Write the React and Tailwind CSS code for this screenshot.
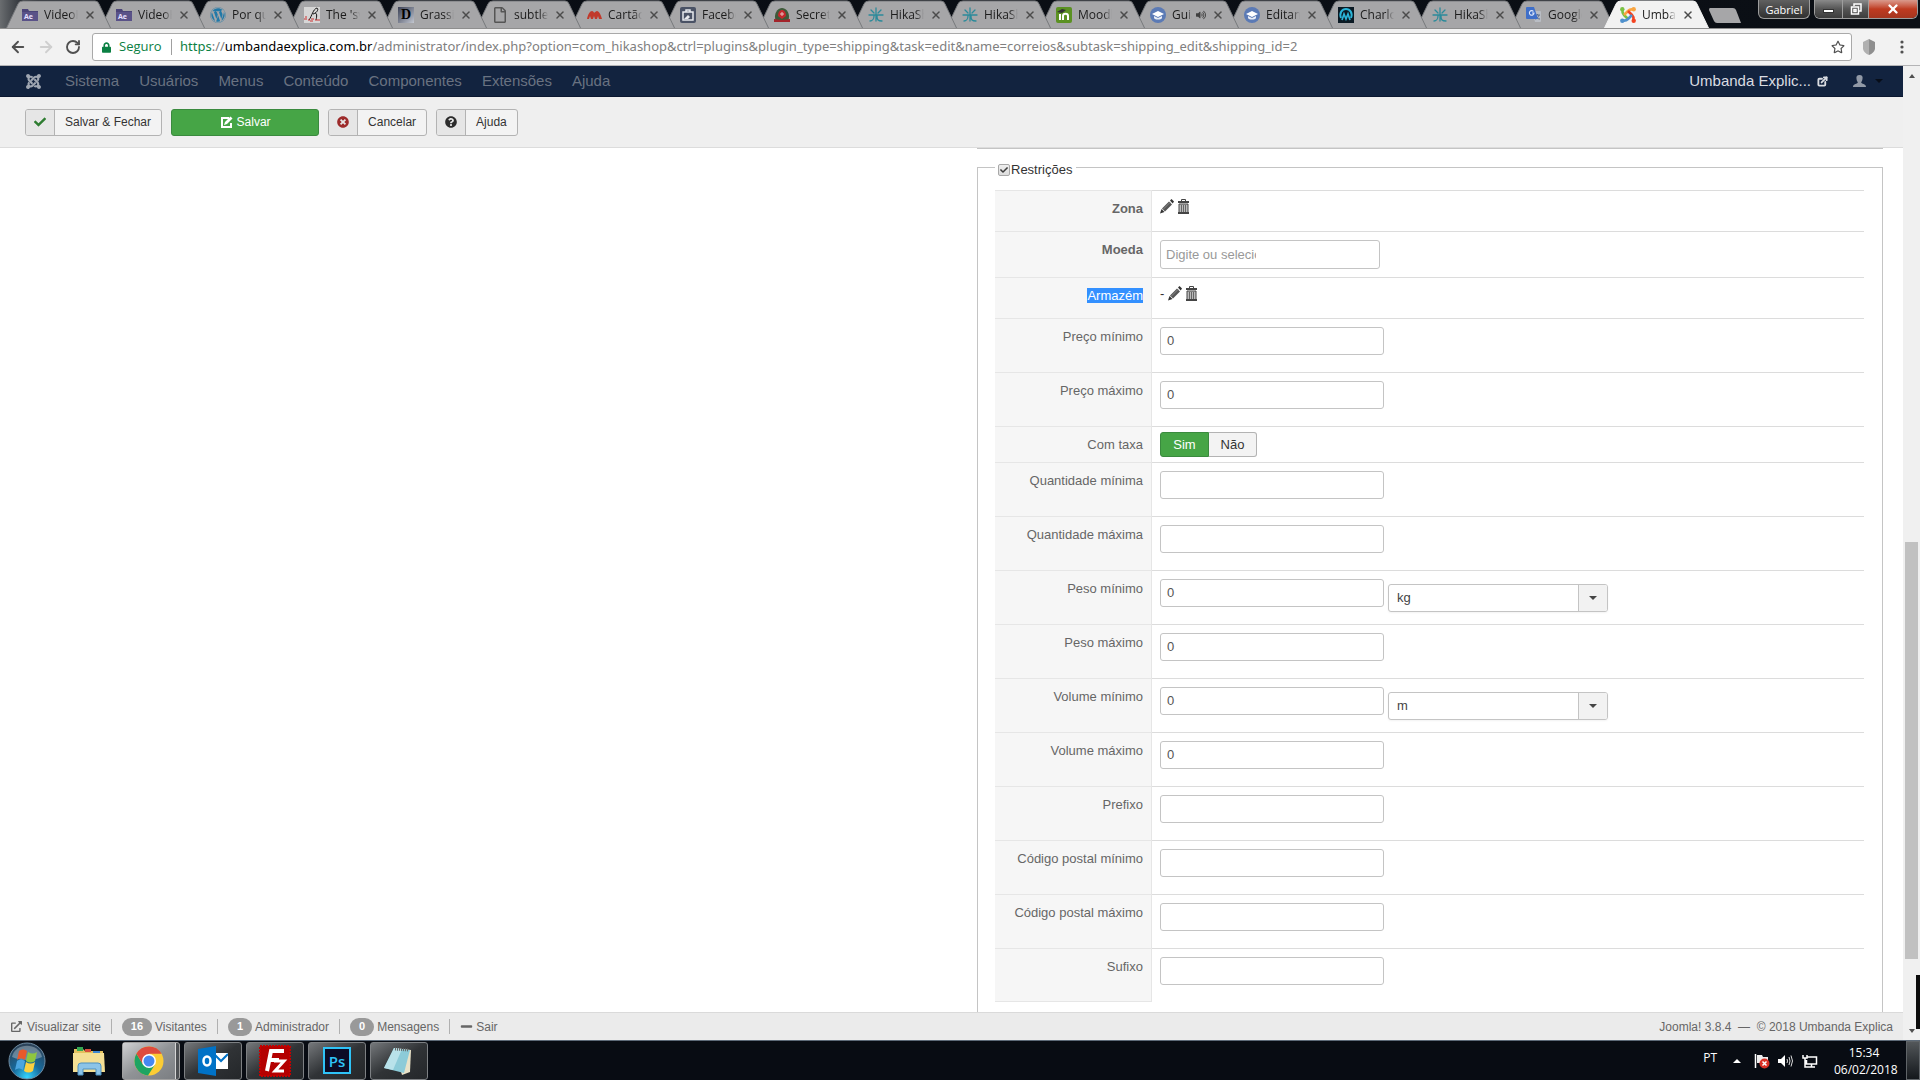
import { useState } from "react";
import {
  FaCheck,
  FaExternalLinkAlt,
  FaJoomla,
  FaLock,
  FaMinus,
  FaQuestionCircle,
  FaRegFile,
  FaRegStar,
  FaTimesCircle,
  FaVolumeUp,
  FaWordpress,
} from "react-icons/fa";
import { FiExternalLink } from "react-icons/fi";
import { ArrowLeft, ArrowRight, RotateCw, X } from "lucide-react";

/* ---------- tab icons ---------- */

const AfterEffectsIcon = () => (
  <svg viewBox="0 0 16 16" className="h-4 w-4">
    <path d="M0 2h6l1 2h9v10H0z" fill="#4b4478" />
    <path d="M0 5h16v9H0z" fill="#5a5288" />
    <text x="2" y="12" fontSize="7" fontWeight="bold" fill="#e6e0ff" fontFamily="Open Sans, sans-serif">Ae</text>
  </svg>
);

const SvelloIcon = () => (
  <svg viewBox="0 0 16 16" className="h-4 w-4">
    <rect width="16" height="16" fill="#d6d6d6" />
    <path d="M5 13C8 9 9 2 13 1c2 1 0 5-4 6M11 6c2 0 2 3 1 7" fill="none" stroke="#111" strokeWidth="1" />
    <path d="M0 12h3M4 13h2M7 12h3M11 13h5M1 10h2M6 14h3" stroke="#c33" strokeWidth="1" />
  </svg>
);

const GrassiIcon = () => (
  <span className="flex h-4 w-4 items-center justify-center bg-linear-to-br from-[#3c4256] to-[#c3c7d0] font-['Liberation_Serif',serif] text-sm leading-4 font-bold text-black">
    D
  </span>
);

const CartaoIcon = () => (
  <svg viewBox="0 0 16 16" className="h-4 w-4">
    <path d="M1 12c1-5 3-8 5-8 1 0 2 1 2 2 1-1 2-2 3-2 2 0 4 4 5 8h-3l-1-3-1 3H9l-1-3-1 3H5l-1-3-1 3z" fill="#c1392b" />
  </svg>
);

const FacebookIcon = () => (
  <svg viewBox="0 0 16 16" className="h-4 w-4">
    <rect width="16" height="16" rx="2" fill="#4a5265" />
    <path d="M3 5h10v8H3zM6 5V3h4v2" fill="none" stroke="#e8eaee" strokeWidth="1.500" />
    <path d="M4 12l4-4 2 2-2 2z" fill="#e8eaee" />
  </svg>
);

const SecretIcon = () => (
  <svg viewBox="0 0 16 16" className="h-4 w-4">
    <path d="M2 14C-1 8 3 1 8 1s9 7 6 13z" fill="#3f5a3a" />
    <path d="M4 9c0-4 2-6 4-6s4 2 4 6l-4 3z" fill="#c6282d" />
    <path d="M0 12l8 1 8-1v3H0z" fill="#a3242b" />
    <path d="M6 7h4M8 5v4" stroke="#e6c0c0" />
  </svg>
);

const HikaIcon = () => (
  <svg viewBox="0 0 16 16" className="h-4 w-4" fill="none" stroke="#2b8a9a" strokeWidth="1.300" strokeLinecap="round">
    <path d="M8 1v6M3 3l3 3M13 3l-3 3M1 8h14M6 9c0 3-2 5-4 5M9 9c0 4 1 5 5 5M8 9v5" />
  </svg>
);

const MoodleIcon = () => (
  <svg viewBox="0 0 16 16" className="h-4 w-4">
    <rect width="16" height="16" rx="2" fill="#5b9122" />
    <path d="M4 13V7M7 13V9c0-3 5-3 5 0v4" fill="none" stroke="#fff" strokeWidth="2" />
    <path d="M1 5l5-3 4 1-4 3z" fill="#333" />
  </svg>
);

const GraduateIcon = () => (
  <svg viewBox="0 0 16 16" className="h-4 w-4">
    <circle cx="8" cy="8" r="8" fill="#5b7ab5" />
    <path d="M2 7l6-3 6 3-6 3z" fill="#fff" />
    <path d="M4 9v2c1 2 7 2 8 0V9l-4 2z" fill="#e8edf6" />
  </svg>
);

const CharloIcon = () => (
  <svg viewBox="0 0 16 16" className="h-4 w-4">
    <rect width="16" height="16" fill="#0b1a24" />
    <path d="M3 11C1 6 4 2 8 2s7 4 5 9" fill="none" stroke="#2bb5d8" strokeWidth="2" />
    <path d="M4 13l2-6 2 5 2-5 2 6" fill="none" stroke="#2bb5d8" strokeWidth="1.700" />
  </svg>
);

const TranslateIcon = () => (
  <svg viewBox="0 0 16 16" className="h-4 w-4">
    <path d="M6 4h8q1 0 1 1v9q0 1-1 1H9z" fill="#b9bdc4" />
    <path d="M9 8h5M11.500 7v1M13 8c-.500 2-2 4-4 4M10 9c1 2 2 3 4 3" fill="none" stroke="#5d6f8f" />
    <path d="M1 0h7l4 12H1q-1 0-1-1V1q0-1 1-1z" fill="#3f6fc9" />
    <path d="M7.500 4.500A2.300 2.300 0 1 0 8 6H6" fill="none" stroke="#dfe8fa" strokeWidth="1.100" />
  </svg>
);

const JoomlaColorIcon = () => (
  <svg viewBox="0 0 16 16" className="h-4 w-4" fill="none" strokeWidth="2.600">
    <path d="M2.500 3C2 6 3 7 4 8l4 4" stroke="#7ac143" />
    <path d="M13 2.500C10 2 9 3 8 4L4 8" stroke="#f9a541" />
    <path d="M13.500 13C14 10 13 9 12 8L8 4" stroke="#f44321" />
    <path d="M3 13.500C6 14 7 13 8 12l4-4" stroke="#5091cd" />
    <g stroke="none">
      <circle cx="2.300" cy="2.300" r="2.200" fill="#7ac143" />
      <circle cx="13.700" cy="2.300" r="2.200" fill="#f9a541" />
      <circle cx="13.700" cy="13.700" r="2.200" fill="#f44321" />
      <circle cx="2.300" cy="13.700" r="2.200" fill="#5091cd" />
    </g>
  </svg>
);

const tabs = [
  { title: "VideoHive", icon: <AfterEffectsIcon /> },
  { title: "VideoHive", icon: <AfterEffectsIcon /> },
  { title: "Por que", icon: <FaWordpress className="h-4 w-4 text-[#2179a8]" /> },
  { title: "The 'svello", icon: <SvelloIcon /> },
  { title: "Grassi_", icon: <GrassiIcon /> },
  { title: "subtle_p", icon: <FaRegFile className="h-4 w-4 text-[#555]" /> },
  { title: "Cartão", icon: <CartaoIcon /> },
  { title: "Facebook", icon: <FacebookIcon /> },
  { title: "Secreta", icon: <SecretIcon /> },
  { title: "HikaShop", icon: <HikaIcon /> },
  { title: "HikaShop", icon: <HikaIcon /> },
  { title: "Moodle", icon: <MoodleIcon /> },
  { title: "Guia", icon: <GraduateIcon />, audio: true },
  { title: "Editando", icon: <GraduateIcon /> },
  { title: "Charlott", icon: <CharloIcon /> },
  { title: "HikaShop", icon: <HikaIcon /> },
  { title: "Google", icon: <TranslateIcon /> },
  { title: "Umbanda", icon: <JoomlaColorIcon />, active: true },
];

const Tab = ({ tab, order }) => (
  <div className="relative h-[29px] w-[94px] shrink-0" style={{ zIndex: tab.active ? 50 : order }}>
    <svg viewBox="0 0 106 29" className="absolute top-0 left-0 h-[29px] w-[106px]">
      <path
        d="M0 29L12 4Q13 1 17 1H89Q92 1 93 4L105 29Z"
        fill={tab.active ? "#f2f2f2" : "#a6a6a8"}
        stroke={tab.active ? "#f2f2f2" : "#77797c"}
        strokeWidth="1"
      />
    </svg>
    <div className="relative flex h-[29px] items-center pl-4">
      {tab.icon}
      <span
        className={`ml-[6px] overflow-hidden text-xs whitespace-nowrap text-[#1c1c1c] mask-r-from-75% ${
          tab.audio ? "w-[20px]" : "w-[34px]"
        }`}
      >
        {tab.title}
      </span>
      {tab.audio && <FaVolumeUp className="ml-[4px] h-[10px] w-[10px] text-[#3f3f3f]" />}
      <button aria-label="Fechar guia" className="ml-[6px] text-[#4c4c4c]">
        <X className="h-3 w-3" strokeWidth={3} />
      </button>
    </div>
  </div>
);

const BrowserChrome = () => (
  <header className="shrink-0 font-['Open_Sans','Noto_Sans',sans-serif]">
    <div className="flex h-[29px] items-start justify-between overflow-hidden border-b border-[#8e8e8e] bg-linear-to-r from-[#6a6d70] from-0% via-[#090d14] via-2% to-[#0b0f15]">
      <div className="flex pl-[6px]">
        {tabs.map((tab, i) => (
          <Tab key={i} tab={tab} order={30 - i} />
        ))}
        <button aria-label="Nova guia" className="mt-2 ml-[11px] h-[16px] w-[32px]">
          <svg viewBox="0 0 32 16" className="h-4 w-8">
            <path d="M1 0H24Q26 0 27 2L32 15H8Q6 15 5 13L0 2Q0 0 1 0Z" fill="#a6a6a8" />
          </svg>
        </button>
      </div>
      <div className="flex h-[19px] gap-1 pr-[2px]">
        <button className="w-[52px] rounded-b-md border border-t-0 border-[#9d9d9d] bg-linear-to-b from-[#606060] to-[#303030] text-[11px] leading-[17px] text-white">
          Gabriel
        </button>
        <div className="flex overflow-hidden rounded-b-md border border-t-0 border-[#9d9d9d] text-white">
          <button aria-label="Minimizar" className="flex w-[27px] items-center justify-center bg-linear-to-b from-[#8a8a8a] via-[#555] to-[#3d3d3d]">
            <span className="mt-1 h-[4px] w-[11px] border border-[#333] bg-white" />
          </button>
          <button aria-label="Restaurar" className="flex w-[27px] items-center justify-center border-x border-[#9d9d9d] bg-linear-to-b from-[#8a8a8a] via-[#555] to-[#3d3d3d]">
            <svg viewBox="0 0 12 12" className="h-3 w-3" fill="none" stroke="#fff" strokeWidth="1.500">
              <path d="M4 3V1h7v7H9M1.500 4h7v7h-7zM4 6.500h2v2H4z" />
            </svg>
          </button>
          <button aria-label="Fechar" className="flex w-[48px] items-center justify-center bg-linear-to-b from-[#d9998c] via-[#bf3a20] to-[#a5361f]">
            <X className="h-[14px] w-[14px]" strokeWidth={4} />
          </button>
        </div>
      </div>
    </div>

    <div className="flex h-[37px] items-center border-b border-[#b4b4b6] bg-[#f2f2f2]">
      <div className="flex w-[92px] items-center gap-[10px] pl-[9px] text-[#505050]">
        <button aria-label="Voltar"><ArrowLeft className="h-[18px] w-[18px]" strokeWidth={2.500} /></button>
        <button aria-label="Avançar" className="text-[#cfcfcf]"><ArrowRight className="h-[18px] w-[18px]" strokeWidth={2.500} /></button>
        <button aria-label="Recarregar"><RotateCw className="h-4 w-4" strokeWidth={2.800} /></button>
      </div>
      <div className="flex h-[28px] flex-1 items-center rounded-[3px] border border-[#a9a9a9] bg-white pr-[6px] pl-[9px] text-[13px] whitespace-nowrap">
        <FaLock className="h-[11px] w-[9px] text-[#0b8043]" />
        <span className="ml-2 w-[52px] text-[#0b8043]">Seguro</span>
        <span className="mr-2 h-4 w-px bg-[#a0a0a0]" />
        <div className="flex-1 overflow-hidden font-['Noto_Sans','Open_Sans',sans-serif] text-[#808080]">
          <span className="text-[#0b8043]">https</span>://<span className="text-black">umbandaexplica.com.br</span>
          /administrator/index.php?option=com_hikashop&amp;ctrl=plugins&amp;plugin_type=shipping&amp;task=edit&amp;name=correios&amp;subtask=shipping_edit&amp;shipping_id=2
        </div>
        <button aria-label="Favoritar" className="text-[#505050]"><FaRegStar className="h-[14px] w-[14px]" /></button>
      </div>
      <div className="flex w-[68px] items-center justify-between pr-[16px] pl-[10px]">
        <svg viewBox="0 0 14 16" className="h-4 w-[14px]">
          <path d="M7 0l6 3v7q-1 4-6 6z" fill="#8f8f8f" />
          <path d="M7 0L1 3v7q1 4 6 6z" fill="#b0b0b0" />
        </svg>
        <button aria-label="Menu">
          <svg viewBox="0 0 4 14" className="h-[14px] w-1" fill="#505050">
            <circle cx="2" cy="2" r="1.600" /><circle cx="2" cy="7" r="1.600" /><circle cx="2" cy="12" r="1.600" />
          </svg>
        </button>
      </div>
    </div>
  </header>
);

/* ---------- Joomla admin ---------- */

const menu = ["Sistema", "Usuários", "Menus", "Conteúdo", "Componentes", "Extensões", "Ajuda"];

const AdminNav = () => (
  <nav className="flex h-[31px] shrink-0 items-center border-b border-[#0b1730] bg-[#12233f] pl-[25px] text-[15px]">
    <FaJoomla className="h-[17px] w-[17px] text-[#a0a7b2]" />
    <div className="flex gap-5 pl-[23px]">
      {menu.map((item) => (
        <a key={item} href="#" className="text-[#697281]">{item}</a>
      ))}
    </div>
    <div className="ml-auto flex items-center pr-[20px]">
      <a href="#" className="flex items-center gap-[6px] text-[#dadde2]">
        Umbanda Explic...
        <FiExternalLink className="h-[11px] w-[11px]" strokeWidth={4} />
      </a>
      <button aria-label="Usuário" className="ml-[25px] flex items-center gap-[9px]">
        <svg viewBox="0 0 13 12" className="h-3 w-[13px]" fill="#9199a6">
          <path d="M6.500 0C9 0 10 1.500 9.500 4 9.200 6 8.500 6.500 8.200 7.500c0 1.500 4.800 1 4.800 4.500H0c0-3.500 4.800-3 4.800-4.500C4.500 6.500 3.800 6 3.500 4 3 1.500 4 0 6.500 0z" />
        </svg>
        <span className="border-x-4 border-t-4 border-x-transparent border-t-[#070d18]" />
      </button>
    </div>
  </nav>
);

const ToolbarButton = ({ icon, children }) => (
  <button className="flex h-[27px] overflow-hidden rounded-[3px] border border-[#b3b3b3] bg-[#f3f3f3] text-xs text-[#333]">
    <span className="flex h-full w-[29px] items-center justify-center border-r border-[#b3b3b3] bg-[#e6e6e6]">{icon}</span>
    <span className="flex h-full items-center px-[10px]">{children}</span>
  </button>
);

const Toolbar = () => (
  <div className="flex h-[51px] shrink-0 items-center gap-[9px] border-b border-[#dcdcdc] bg-[#efefef] px-[25px]">
    <ToolbarButton icon={<FaCheck className="h-3 w-3 text-[#2f7d32]" />}>Salvar &amp; Fechar</ToolbarButton>
    <button className="flex h-[27px] w-[148px] items-center justify-center gap-1 rounded-[3px] border border-[#3a8a3e] bg-[#46a546] text-xs text-white">
      <svg viewBox="0 0 13 13" className="h-[13px] w-[13px]">
        <path d="M9 2H2v9h9V7" fill="none" stroke="#fff" strokeWidth="2" />
        <path d="M4 9l1-3 5.500-5.500 2 2L7 8z" fill="#fff" />
      </svg>
      Salvar
    </button>
    <ToolbarButton icon={<FaTimesCircle className="h-3 w-3 text-[#9d2b2b]" />}>Cancelar</ToolbarButton>
    <ToolbarButton icon={<FaQuestionCircle className="h-3 w-3 text-[#2c2c2c]" />}>Ajuda</ToolbarButton>
  </div>
);

const PencilIcon = () => (
  <svg viewBox="0 0 14 15" className="h-[15px] w-[14px]">
    <path d="M0 14.500L1.500 10 4.500 13z" fill="#333" />
    <path d="M2 9.500L9 2.500 12 5.500 5 12.500z" fill="#555" />
    <path d="M3 10.500L10 3.500" stroke="#888" />
    <path d="M10 1.500L11.500 0 14 2.500 12.700 4.500z" fill="#333" />
  </svg>
);

const TrashIcon = () => (
  <svg viewBox="0 0 11 15" className="h-[15px] w-[11px]">
    <path d="M3.500 2V.500h4V2" fill="none" stroke="#444" />
    <path d="M0 2h11v2H0z" fill="#444" />
    <path d="M1 5h9v9H1z" fill="#bbb" stroke="#444" />
    <path d="M3.500 6v8M5.500 6v8M7.500 6v8" stroke="#666" />
    <path d="M0 14h11" stroke="#444" strokeWidth="2" />
  </svg>
);

const EditIcons = () => (
  <>
    <button aria-label="Editar"><PencilIcon /></button>
    <button aria-label="Excluir"><TrashIcon /></button>
  </>
);

const UnitSelect = ({ name, options }) => (
  <div className="mt-[5px] flex h-7 w-[220px] overflow-hidden rounded-[3px] border border-[#c4c4c4] bg-white shadow-xs">
    <select aria-label={name} className="flex-1 appearance-none px-2 text-[13px] text-[#444] outline-none">
      {options.map((o) => <option key={o}>{o}</option>)}
    </select>
    <span className="flex w-[29px] items-center justify-center border-l border-[#c4c4c4] bg-[#f2f2f2]">
      <span className="border-x-4 border-t-4 border-x-transparent border-t-[#444]" />
    </span>
  </div>
);

const fields = [
  { id: "preco_min", label: "Preço mínimo", value: "0" },
  { id: "preco_max", label: "Preço máximo", value: "0" },
  { id: "taxa", label: "Com taxa", toggle: true },
  { id: "qtd_min", label: "Quantidade mínima", value: "" },
  { id: "qtd_max", label: "Quantidade máxima", value: "" },
  { id: "peso_min", label: "Peso mínimo", value: "0", units: ["kg", "g"] },
  { id: "peso_max", label: "Peso máximo", value: "0" },
  { id: "vol_min", label: "Volume mínimo", value: "0", units: ["m", "cm"] },
  { id: "vol_max", label: "Volume máximo", value: "0" },
  { id: "prefixo", label: "Prefixo", value: "" },
  { id: "cep_min", label: "Código postal mínimo", value: "" },
  { id: "cep_max", label: "Código postal máximo", value: "" },
  { id: "sufixo", label: "Sufixo", value: "" },
];

const Row = ({ label, children, height = "h-[54px]", last }) => (
  <tr className={height}>
    <th
      scope="row"
      className={`w-[157px] border-t border-r border-[#e6e6e6] bg-[#f6f6f6] pt-[9px] pr-2 text-right align-top leading-[18px] font-normal text-[#666] ${last ? "border-b" : ""}`}
    >
      {label}
    </th>
    <td className="border-t border-[#dcdcdc] pl-2 align-top">{children}</td>
  </tr>
);

const TaxToggle = () => {
  const [withTax, setWithTax] = useState(true);
  const on = "border-[#3a8a3e] bg-[#46a546] text-white";
  const off = "border-[#b3b3b3] bg-[#f3f3f3] text-[#333]";
  return (
    <div className="mt-[5px] flex h-[25px]">
      <button onClick={() => setWithTax(true)} className={`w-[49px] rounded-l-[3px] border ${withTax ? on : off}`}>Sim</button>
      <button onClick={() => setWithTax(false)} className={`w-[48px] rounded-r-[3px] border border-l-0 ${withTax ? off : on}`}>Não</button>
    </div>
  );
};

const Restrictions = () => (
  <fieldset className="border border-[#c4c4c4] pt-[13px] pr-[18px] pb-10 pl-[17px]">
    <legend className="flex h-5 items-center pt-[6px] pr-1 pl-[3px] text-[#333]">
      <span className="relative flex">
        <input
          id="restricoes"
          type="checkbox"
          defaultChecked
          className="peer h-3 w-3 appearance-none rounded-xs border border-[#a8a8a8] bg-linear-to-b from-[#efefef] to-[#dcdcdc]"
        />
        <FaCheck className="pointer-events-none absolute inset-0.5 hidden h-2 w-2 text-[#3c3c3c] peer-checked:block" />
      </span>
      <label htmlFor="restricoes" className="pl-px">Restrições</label>
    </legend>
    <table className="w-full border-separate border-spacing-0 text-[13px]">
      <tbody>
        <Row label={<b>Zona</b>} height="h-[41px]">
          <div className="flex items-center gap-1 pt-2"><EditIcons /></div>
        </Row>
        <Row label={<label htmlFor="moeda" className="font-bold">Moeda</label>} height="h-[46px]">
          <div className="mt-2 h-[29px] w-[220px] rounded-[3px] border border-[#c4c4c4] bg-white pl-[5px]">
            <input id="moeda" placeholder="Digite ou selecione" className="h-full w-[90px] outline-none placeholder:text-[#999]" />
          </div>
        </Row>
        <Row label={<span className="bg-[#3390ff] text-white">Armazém</span>} height="h-[41px]">
          <div className="flex items-center gap-1 pt-2 leading-[15px]">-<EditIcons /></div>
        </Row>
        {fields.map((f, i) => (
          <Row
            key={f.id}
            label={f.toggle ? f.label : <label htmlFor={f.id}>{f.label}</label>}
            height={f.toggle ? "h-[36px]" : "h-[54px]"}
            last={i === fields.length - 1}
          >
            {f.toggle ? (
              <TaxToggle />
            ) : (
              <div className="flex items-start gap-1 pt-2">
                <input
                  id={f.id}
                  defaultValue={f.value}
                  className="h-7 w-[224px] rounded-[3px] border border-[#c4c4c4] bg-white px-[6px] pb-0.5 text-[#555]"
                />
                {f.units && <UnitSelect name={`Unidade de ${f.label}`} options={f.units} />}
              </div>
            )}
          </Row>
        ))}
      </tbody>
    </table>
  </fieldset>
);

const Badge = ({ children }) => (
  <span className="flex h-[18px] items-center rounded-full bg-[#999] px-[9px] text-[11px] font-bold text-white">{children}</span>
);

const StatusBar = () => (
  <footer className="flex h-[28px] shrink-0 items-center border-t border-[#dadada] bg-[#ebebeb] pr-[10px] pl-[11px] text-xs text-[#666]">
    <a href="#" className="flex items-center gap-[5px]"><FaExternalLinkAlt className="h-[11px] w-[11px]" />Visualizar site</a>
    <span className="mx-[10px] h-[15px] w-px bg-[#b0b0b0]" />
    <span className="flex items-center gap-[3px]"><Badge>16</Badge>Visitantes</span>
    <span className="mx-[10px] h-[15px] w-px bg-[#b0b0b0]" />
    <span className="flex items-center gap-[3px]"><Badge>1</Badge>Administrador</span>
    <span className="mx-[10px] h-[15px] w-px bg-[#b0b0b0]" />
    <a href="#" className="flex items-center gap-[3px]"><Badge>0</Badge>Mensagens</a>
    <span className="mx-[10px] h-[15px] w-px bg-[#b0b0b0]" />
    <a href="#" className="flex items-center gap-[3px]"><FaMinus className="h-[13px] w-[13px]" />Sair</a>
    <span className="ml-auto whitespace-pre">Joomla! 3.8.4  —  © 2018 Umbanda Explica</span>
  </footer>
);

const Scrollbar = () => (
  <div className="flex w-[17px] shrink-0 flex-col items-center bg-[#f0f0f0]">
    <span className="mt-2 border-x-[3px] border-b-4 border-x-transparent border-b-[#505050]" />
    <div className="flex-[464]" />
    <div className="w-[13px] flex-[417] bg-[#c1c1c1]" />
    <div className="flex-[16]" />
    <div className="w-1 flex-[54] self-end bg-[#0c0c0c]" />
    <span className="mb-[7px] border-x-[3px] border-t-4 border-x-transparent border-t-[#505050]" />
  </div>
);

/* ---------- Windows taskbar ---------- */

const StartOrb = () => (
  <svg viewBox="0 0 38 38" className="h-[38px] w-[38px]">
    <defs>
      <radialGradient id="orb" cx="50%" cy="95%" r="90%">
        <stop offset="0" stopColor="#35d6ff" />
        <stop offset=".45" stopColor="#176a9c" />
        <stop offset="1" stopColor="#2b4258" />
      </radialGradient>
    </defs>
    <circle cx="19" cy="19" r="18" fill="url(#orb)" stroke="#6f8ca3" />
    <path d="M4 15C7 0 31 0 34 15 26 19 12 19 4 15z" fill="#fff" opacity=".3" />
    <path d="M11 9c3-2 5-2 8 0l-2 9c-3-2-5-2-8 0z" fill="#e8592b" />
    <path d="M20 10c3 2 6 2 9 0l-2 9c-3 2-6 2-9 0z" fill="#8fc63f" />
    <path d="M9 19c3-2 5-2 8 0l-2 9c-3-2-5-2-8 0z" fill="#4aa5e0" />
    <path d="M18 20c3 2 6 2 9 0l-2 9c-3 2-6 2-9 0z" fill="#fbd040" />
  </svg>
);

const ExplorerIcon = () => (
  <svg viewBox="0 0 32 30" className="h-[30px] w-8">
    <path d="M1 3h9l2 2h18v20H1z" fill="#e3c25e" />
    <path d="M4 1h6v4H4z" fill="#35a853" /><path d="M12 3h6v3h-6z" fill="#d8503c" /><path d="M20 5h7v3h-7z" fill="#3f87d1" />
    <path d="M0 7h31l1 19H0z" fill="#f4df94" />
    <path d="M5 29V20q0-3 3-3h17q3 0 3 3v9h-5v-6H10v6z" fill="#8cc4e8" stroke="#4c91c2" />
  </svg>
);

const ChromeIcon = () => (
  <svg viewBox="0 0 30 30" className="h-[30px] w-[30px]">
    <circle cx="15" cy="15" r="14.500" fill="#fbcc34" />
    <path d="M2.400 7.800A14.500 14.500 0 0 0 14 29.500L21 18.500 15 15 9 18.500z" fill="#1da462" />
    <path d="M2.400 7.800A14.500 14.500 0 0 1 27.600 7.800H15L9 18.500z" fill="#dd4b3e" />
    <circle cx="15" cy="15" r="7" fill="#fff" />
    <circle cx="15" cy="15" r="5.500" fill="#4688f1" />
  </svg>
);

const OutlookIcon = () => (
  <svg viewBox="0 0 30 30" className="h-[30px] w-[30px]">
    <path d="M16 7h14v16H16z" fill="#fff" />
    <path d="M17 9l6 6 7-7" fill="none" stroke="#0072c6" strokeWidth="2" />
    <path d="M0 3l18-3v30L0 27z" fill="#0072c6" />
    <ellipse cx="9" cy="15" rx="3.500" ry="4.500" fill="none" stroke="#fff" strokeWidth="2.500" />
  </svg>
);

const FileZillaIcon = () => (
  <svg viewBox="0 0 32 32" className="h-8 w-8">
    <rect x="1" y="1" width="30" height="30" fill="#b40000" stroke="#c40000" strokeWidth="2" strokeDasharray="2 1" />
    <path d="M8 26L12 6h13M10 15h10" fill="none" stroke="#fff" strokeWidth="4" />
    <path d="M15 16h10l-9 10h9" fill="none" stroke="#fff" strokeWidth="3" />
  </svg>
);

const PhotoshopIcon = () => (
  <span className="flex h-[27px] w-[28px] items-center justify-center border-2 border-[#2fc3f7] bg-[#0c0c26] text-[15px] font-semibold text-[#2fc3f7]">Ps</span>
);

const NotepadIcon = () => (
  <svg viewBox="0 0 32 30" className="h-[30px] w-8">
    <path d="M11 2l17 2-1 22-8 3z" fill="#e8e2c8" />
    <path d="M11 2l16 2-6 23L1 22z" fill="#8ccbd8" />
    <path d="M11 2l8 1-9 21-9-2z" fill="#b9e2ea" />
    <path d="M12 3l14 1" stroke="#666" strokeWidth="3" strokeDasharray="1 1" />
  </svg>
);

const apps = [
  { name: "Outlook", icon: <OutlookIcon /> },
  { name: "FileZilla", icon: <FileZillaIcon /> },
  { name: "Photoshop", icon: <PhotoshopIcon /> },
  { name: "Bloco de notas", icon: <NotepadIcon /> },
];

const Taskbar = () => (
  <div className="flex h-[40px] shrink-0 items-center border-t border-[#5d6a78] bg-[#080c13] font-['Open_Sans','Noto_Sans',sans-serif] text-xs text-white">
    <button aria-label="Iniciar" className="ml-2"><StartOrb /></button>
    <button aria-label="Explorador" className="ml-[27px]"><ExplorerIcon /></button>
    <button aria-label="Chrome" className="ml-[17px] flex h-[38px] w-[58px] rounded-[3px] border border-[#a0a0a0] bg-[#4d5053]">
      <span className="flex h-full w-[53px] items-center justify-center border-r border-[#d6d6d6] bg-linear-to-br from-[#d0d1d3] via-[#909396] to-[#7b7e82]">
        <ChromeIcon />
      </span>
    </button>
    <div className="ml-1 flex gap-1">
      {apps.map((app) => (
        <button
          key={app.name}
          aria-label={app.name}
          className="flex h-[38px] w-[58px] items-center justify-center rounded-[3px] border border-[#7d8083] bg-linear-to-br from-[#75787b] via-[#303336] to-[#24272a]"
        >
          {app.icon}
        </button>
      ))}
    </div>
    <div className="ml-auto flex h-full items-center">
      <span className="pb-[6px]">PT</span>
      <span className="ml-4 border-x-4 border-b-4 border-x-transparent border-b-white" />
      <svg viewBox="0 0 16 16" className="ml-[13px] h-4 w-4">
        <path d="M1.500 1v14" stroke="#fff" strokeWidth="1.500" />
        <path d="M3 2h5l1 2h5v6H3z" fill="#eee" />
        <circle cx="10.500" cy="10.500" r="5" fill="#d93025" />
        <path d="M8.500 8.500l4 4M12.500 8.500l-4 4" stroke="#fff" strokeWidth="1.500" />
      </svg>
      <svg viewBox="0 0 16 14" className="ml-[8px] h-[14px] w-4">
        <path d="M0 5h3l4-4v12L3 9H0z" fill="#fff" />
        <path d="M9 5q1 2 0 4M11 3q2 4 0 8M13 1.500q3 5.500 0 11" fill="none" stroke="#ddd" />
      </svg>
      <svg viewBox="0 0 16 14" className="ml-[8px] h-[14px] w-4" fill="none" stroke="#fff" strokeWidth="1.500">
        <path d="M5 3h9.500v7H4.500V6M6 13h7M9.500 10v3M1 1v3h4V1M3 4v9h3" />
      </svg>
      <div className="ml-4 w-[60px] text-center leading-[17px] whitespace-nowrap">
        <div>15:34</div>
        <div>06/02/2018</div>
      </div>
      <button aria-label="Mostrar área de trabalho" className="ml-3 h-[39px] w-[14px] border border-[#5f6468] bg-linear-to-b from-[#53575a] to-[#14181c]" />
    </div>
  </div>
);

export default function App() {
  return (
    <div className="flex h-screen flex-col overflow-hidden bg-white font-['Liberation_Sans',Arial,sans-serif] text-[13px] text-[#333]">
      <BrowserChrome />
      <div className="flex min-h-0 flex-1">
        <div className="flex min-w-0 flex-1 flex-col">
          <AdminNav />
          <Toolbar />
          <main className="grid min-h-0 flex-1 grid-cols-2 gap-[51px] overflow-hidden px-5">
            <div />
            <div>
              <div className="mb-2 border-t border-[#c4c4c4]" />
              <Restrictions />
            </div>
          </main>
          <StatusBar />
        </div>
        <Scrollbar />
      </div>
      <Taskbar />
    </div>
  );
}
